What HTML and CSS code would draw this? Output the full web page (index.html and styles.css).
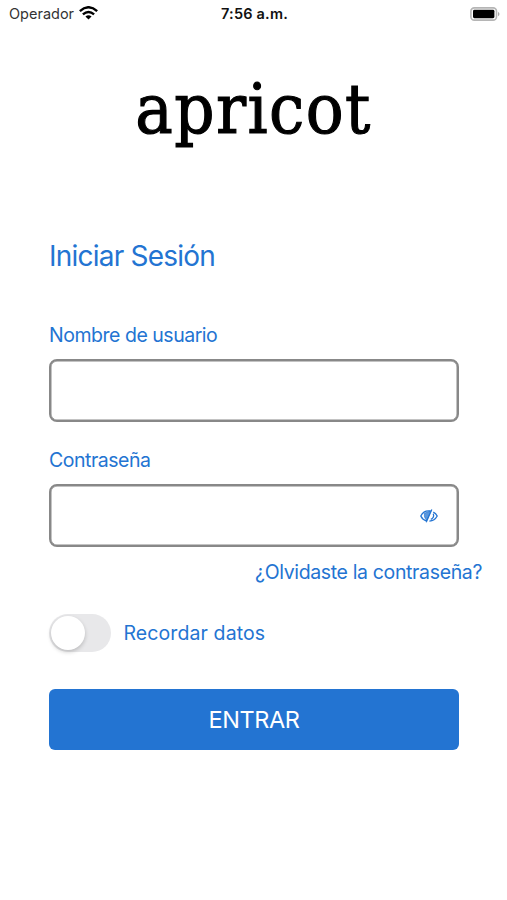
FILE: index.html
```html
<!DOCTYPE html>
<html lang="es">
<head>
<meta charset="utf-8">
<meta name="viewport" content="width=device-width, initial-scale=1">
<title>Iniciar Sesión</title>
<link rel="stylesheet" href="styles.css">
</head>
<body>
<div class="screen">
  <header class="status">
    <div class="carrier"><span>Operador</span>
      <svg class="wifi" viewBox="0 0 18 13" width="19" height="14" fill="none" stroke="#000" stroke-width="2.3"><path d="M.8 4.7Q9-2.6 17.2 4.7M3.7 7.8q5.3-4.6 10.6 0"/><path d="M9 12.6 6.1 9.9q2.9-2.3 5.8 0z" fill="#000" stroke="none"/></svg>
    </div>
    <time class="clock">7:56 a.m.</time>
    <svg class="battery" viewBox="0 0 30 14" width="30" height="14"><rect x=".9" y=".9" width="25.6" height="12.2" rx="3.4" fill="#fff" stroke="#b5b5b5" stroke-width="1.6"/><rect x="3" y="2.8" width="21.4" height="8.4" rx="1.4"/><path d="M28 4.7q3 2.3 0 4.6z" fill="#aaa"/></svg>
  </header>
  <h1 class="brand">apricot</h1>
  <form class="login">
    <h2 class="title">Iniciar Sesión</h2>
    <label class="label" for="user">Nombre de usuario</label>
    <div class="field"><input id="user" type="text"></div>
    <label class="label second" for="pass">Contraseña</label>
    <div class="field"><input id="pass" type="password">
      <svg class="eye" viewBox="0 0 18 14" width="18" height="14" fill="none" stroke="#2374d2" stroke-width="1.3"><path d="M6.7 12C3.8 11.2 1.7 9 .8 7 2.6 3.4 6.2 1.5 10.2 2M13.3 3.1c1.8.9 3.1 2.2 3.9 3.9-1.6 3-4.5 4.9-7.8 5.1M11.8.5 6.2 13.3M13.2 4.8c1.1 2.2.2 4.5-2.4 5.5"/><path d="M4.6 4.2 11 1.8 6.8 11.2C4.7 9.5 3.9 6.8 4.6 4.2z" fill="#2374d2" fill-opacity=".75" stroke-width=".7"/></svg>
    </div>
    <a class="forgot">¿Olvidaste la contraseña?</a>
    <div class="remember"><span class="switch"><span class="knob"></span></span><span class="remember-text">Recordar datos</span></div>
    <button class="submit" type="button">ENTRAR</button>
  </form>
</div>
</body>
</html>
```
FILE: styles.css
```css
* { box-sizing: border-box; }
body { margin: 0; background: #fff; font-family: Inter, "Liberation Sans", sans-serif; color: #2374d2; }
.screen { height: 900px; overflow: hidden; }
.status { display: grid; grid-template-columns: 1fr auto 1fr; align-items: center; height: 27px; padding: 0 7px 0 9px; color: #111; font-size: 14.5px; }
.carrier { display: flex; align-items: center; gap: 5px; }
.carrier span { color: #333; }
.wifi { margin-top: -2px; }
.clock { font-weight: 600; letter-spacing: .2px; }
.battery { justify-self: end; }
.brand { margin: 37px 0 0; height: 90px; line-height: 90px; text-align: center; color: #000; font-family: "DejaVu Serif Condensed", "DejaVu Serif", serif; font-stretch: condensed; font-weight: 400; font-size: 70px; letter-spacing: 1.4px; -webkit-text-stroke: 1.1px #000; }
.login { padding: 0 48px 0 49px; }
.title { margin: 82px 0 0; height: 40px; line-height: 40px; font-size: 28px; font-weight: 400; letter-spacing: -.78px; }
.label { display: block; margin-top: 47px; height: 24px; line-height: 24px; font-size: 19.5px; letter-spacing: -.48px; }
.label.second { margin-top: 26px; }
.field { display: flex; align-items: center; margin-top: 12px; height: 63px; border: 2px solid #888; box-shadow: inset 0 0 0 .5px #888; border-radius: 8px; padding-right: 19px; }
.field input { flex: 1; min-width: 0; height: 100%; border: 0; outline: 0; background: none; padding: 0 16px; font: inherit; font-size: 19px; }
.forgot { display: block; margin: 13px -23px 0 0; height: 25px; line-height: 25px; text-align: right; font-size: 19.5px; letter-spacing: -.36px; }
.remember { display: flex; align-items: center; gap: 12.5px; height: 38px; margin-top: 29px; font-size: 19.5px; letter-spacing: .1px; }
.switch { width: 62px; height: 38px; border-radius: 19px; background: #e8e8ea; padding: 2px; }
.knob { display: block; width: 34px; height: 34px; border-radius: 50%; background: #fff; box-shadow: 0 2px 4px rgba(0,0,0,.2); }
.submit { display: block; width: 100%; height: 61px; margin-top: 37px; border: 0; border-radius: 6px; background: #2374d2; color: #fff; font: 400 23.5px/61px Inter, "Liberation Sans", sans-serif; letter-spacing: -.4px; padding: 0; }
```
